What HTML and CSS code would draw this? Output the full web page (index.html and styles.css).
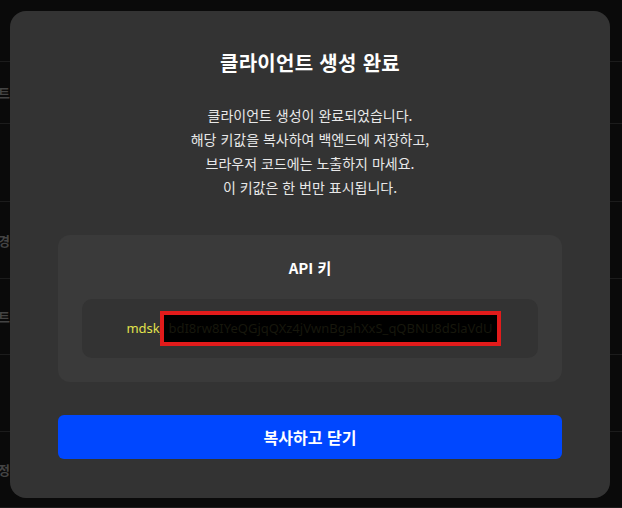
FILE: index.html
```html
<!DOCTYPE html>
<html lang="ko">
<head>
    <meta charset="UTF-8">
    <meta name="viewport" content="width=device-width, initial-scale=1.0">
    <title>클라이언트 생성 완료</title>
    <link rel="stylesheet" href="styles.css">
</head>
<body>
    <!-- page behind the dialog -->
    <div class="page">
        <div class="row row-a"></div>
        <div class="row row-a"><span class="cell">클라이언트</span></div>
        <div class="row row-b"></div>
        <div class="row row-c"><span class="cell">허용 도메인 목록 변경</span></div>
        <div class="row row-d"><span class="cell">테스트</span></div>
        <div class="row row-c"></div>
        <div class="row row-d"><span class="cell">설정</span></div>
    </div>

    <div class="backdrop">
        <div class="modal">
            <h2 class="modal-title">클라이언트 생성 완료</h2>
            <p class="modal-desc">
                클라이언트 생성이 완료되었습니다.<br>
                해당 키값을 복사하여 백엔드에 저장하고,<br>
                브라우저 코드에는 노출하지 마세요.<br>
                이 키값은 한 번만 표시됩니다.
            </p>
            <div class="key-card">
                <div class="key-label">API 키</div>
                <div class="key-box">
                    <span class="key-prefix">mdsk_</span><span class="key-secret">bdI8rw8IYeQGjqQXz4jVwnBgahXxS_qQBNU8dSlaVdU</span>
                </div>
            </div>
            <button class="btn-primary" type="button">복사하고 닫기</button>
        </div>
    </div>
</body>
</html>
```

FILE: styles.css
```css
html, body {
    margin: 0;
    padding: 0;
    height: 100%;
}
body {
    font-family: "Noto Sans CJK KR", "Noto Sans", sans-serif;
    background-color: #0a0a0a;
    color: #fff;
    overflow: hidden;
}
.page {
    display: flex;
    flex-direction: column;
}
.row {
    border-bottom: 1px solid #1c1c1c;
    display: flex;
    align-items: center;
    justify-content: flex-end;
    width: 622px;
    box-sizing: border-box;
}
.row-a {
    height: 62px;
}
.row-b {
    height: 78px;
}
.row-c {
    height: 77px;
}
.row-d {
    height: 76px;
}
.cell {
    margin-right: 612px;
    white-space: nowrap;
    font-size: 13px;
    font-weight: bold;
    color: #444;
}
.backdrop {
    position: fixed;
    inset: 0;
    display: flex;
    align-items: center;
    justify-content: center;
    padding-right: 2px;
}
.modal {
    width: 600px;
    box-sizing: border-box;
    padding: 38px 48px 39px;
    background-color: #333333;
    border-radius: 16px;
    text-align: center;
}
.modal-title {
    margin: 0;
    font-size: 20px;
    line-height: 28px;
    font-weight: bold;
    letter-spacing: 0.3px;
}
.modal-desc {
    margin: 26px 0 36px;
    font-size: 14px;
    line-height: 24px;
    color: #e8e8e8;
}
.key-card {
    background-color: #3a3a3a;
    border-radius: 12px;
    padding: 22px 24px 24px;
}
.key-label {
    font-size: 15px;
    font-weight: bold;
    line-height: 22px;
}
.key-box {
    margin-top: 20px;
    height: 59px;
    padding-left: 7px;
    background-color: #333333;
    border-radius: 10px;
    display: flex;
    align-items: center;
    justify-content: center;
    font-family: "Noto Sans", sans-serif;
    font-size: 13px;
}
.key-prefix {
    color: #e2e34c;
}
.key-secret {
    display: inline-block;
    box-sizing: border-box;
    height: 35px;
    margin-left: -5px;
    background-color: #000;
    color: #17170c;
    border: 4px solid #e21b1b;
    padding: 0 4px;
    line-height: 27px;
}
.btn-primary {
    display: block;
    width: 100%;
    margin-top: 33px;
    height: 44px;
    border: none;
    border-radius: 6px;
    background-color: #0047ff;
    color: #fff;
    font-family: inherit;
    font-size: 16px;
    font-weight: bold;
    cursor: pointer;
}
```
